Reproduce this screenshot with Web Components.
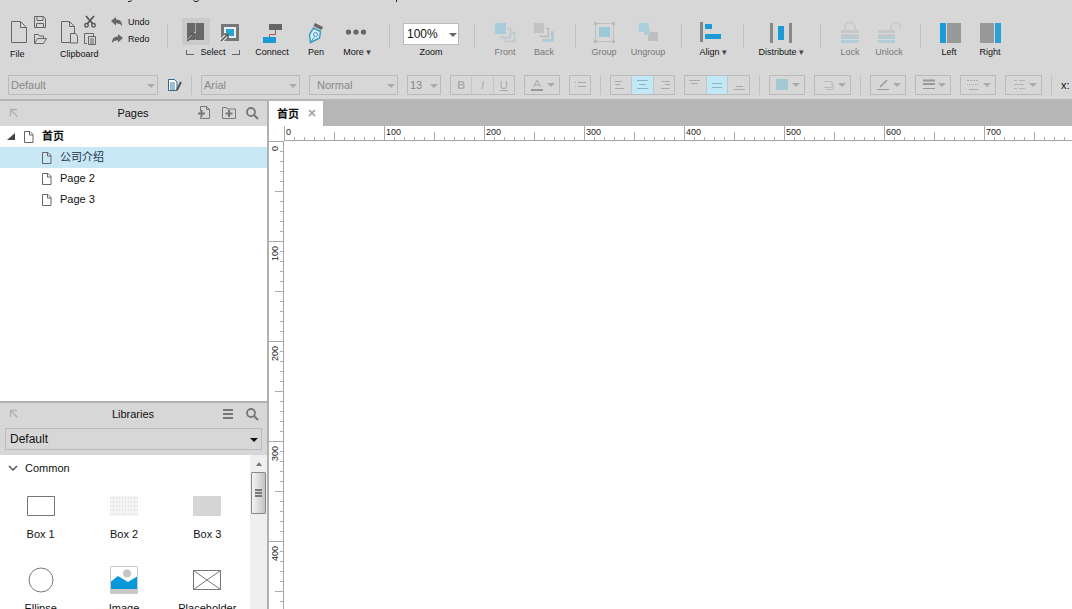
<!DOCTYPE html>
<html lang="en">
<head>
<meta charset="utf-8">
<title>Prototype editor</title>
<style>
  html, body { height: 100%; margin: 0; }
  body { font-family: "Liberation Sans", Arial, "Noto Sans CJK SC", sans-serif; font-size: 11px; color: #111; background: #fff; }
</style>
</head>
<body>
<editor-app></editor-app>
<script>
const ICONS = {
  file: [24, 30, '<path d="M3.5 5.5h9l6 6v15h-15zM12.500 5.500v6h6" fill="none" stroke="#666"/>'],
  save: [16, 15, '<path d="M2.500.5h9l2 2v9h-11zM5 .5v4h6v-4M4.500 11.500v-4h7v4" fill="none" stroke="#666"/>'],
  open: [16, 15, '<path d="M2.500 12.500v-9h4l1 1.500h4v2.500M2.500 12.500l3-5h9l-3 5z" fill="none" stroke="#666"/>'],
  clip: [24, 30, '<path d="M12 26.500H3.500v-21h8l5 5V17M11.500 5.500v5h5" fill="none" stroke="#666"/><path d="M12.500 17.500h5l2 2.500v7h-7z" fill="none" stroke="#666"/>'],
  cut: [16, 15, '<path d="M4 0l6.500 7.500M12 0L5.500 7.500" stroke="#555" stroke-width="1.800" fill="none"/><circle cx="4.500" cy="9.300" r="1.800" fill="none" stroke="#555" stroke-width="1.300"/><circle cx="11.500" cy="9.300" r="1.800" fill="none" stroke="#555" stroke-width="1.300"/>'],
  paste: [16, 15, '<path d="M5 12.500H2.500v-10h9V5" fill="none" stroke="#666"/><path d="M6.500 5.500h7v8h-7z" fill="none" stroke="#666"/><path d="M8 8h4M8 10h4M8 12h4M5 2.500h4" stroke="#666"/>'],
  undo: [14, 13, '<path d="M1 6l5-4v2.500c4 0 6 2 6 6.500-1.500-2-3-2.800-6-2.800V10.500z" fill="#666"/>'],
  redo: [14, 13, '<path d="M13 6L8 2v2.500c-4 0-6 2-6 6.500 1.500-2 3-2.800 6-2.800V10.500z" fill="#666"/>'],
  intersect: [28, 27, '<path d="M5 5h8v17H5zM14 5h8v17h-8z" fill="#686868"/><path d="M13.500 5v17" stroke="#aaa"/><path d="M6 22l7-7v4.500" stroke="#bbb" stroke-width="2" fill="none"/><path d="M5.500 23l6-6M8 16h5v5" stroke="#555" stroke-width="1.500" fill="none"/>'],
  contain: [28, 27, '<path d="M5 6h18v17H5z" fill="#777"/><path d="M8 9h12v11H8z" fill="#e5f3f9"/><path d="M10 11h8v7h-8z" fill="#27a4d5"/><path d="M5 23l7-7" stroke="#ddd" stroke-width="4"/><path d="M5 23l6-6M8 16h4v5" stroke="#555" stroke-width="1.500" fill="none"/>'],
  connect: [24, 24, '<path d="M9 3h13v6H9z" fill="#666"/><path d="M3 16h13v6H3z" fill="#1c9ad6"/><path d="M15.500 9v4.500h-6V16" fill="none" stroke="#a55"/>'],
  pen: [24, 24, '<path d="M11 2l8 4-1.500 3-8-4z" fill="#666"/><path d="M9.500 7l7 3.500-1 6.500-9 4.500-1-8z" fill="#d9eef7" stroke="#3a9cc4" stroke-width="1.500"/><path d="M6.500 21.500l4-6" stroke="#3a9cc4"/><circle cx="11.500" cy="13.500" r="2" fill="none" stroke="#3a9cc4"/>'],
  more: [24, 24, '<g fill="#666"><circle cx="3.500" cy="11" r="2.600"/><circle cx="11" cy="11" r="2.600"/><circle cx="18.500" cy="11" r="2.600"/></g>'],
  front: [24, 24, '<path d="M2 2h11v11H2z" fill="#a9ccda"/><path d="M15 7.500h2.500v9h-9V15M19 11.500h2.500v9h-9V18" stroke="#b9c8ce" fill="none" stroke-width="1.500"/>'],
  back: [24, 24, '<path d="M2 2h10v10H2z" fill="#c2c2c2"/><path d="M14 7.500h2.500v8h-8V14" stroke="#bcbcbc" fill="none" stroke-width="1.500"/><path d="M19 11.500h1.500v8h-9V18" stroke="#a9c9d5" fill="none" stroke-width="2.500"/>'],
  group: [24, 24, '<path d="M3.500 2.500h18v18h-18z" fill="none" stroke="#bfbfbf"/><path d="M7 6h11v10H7z" fill="#9cc8d9"/><path d="M2 1h3v3H2zM20 1h3v3h-3zM2 19h3v3H2zM20 19h3v3h-3z" fill="#bbb"/>'],
  ungroup: [24, 24, '<path d="M3 2h10v9H3z" fill="#aacfdd"/><path d="M12 11h10v9H12z" fill="#bfbfbf"/><path d="M8 9h6v5H8z" fill="#b5ccd5"/>'],
  align: [24, 24, '<path d="M-1 1h3v20h-3z" fill="#888"/><path d="M4 3h7v5H4zM4 13h16v5H4z" fill="#1c9ad6"/>'],
  distribute: [24, 24, '<path d="M1 2h3v20H1zM20 2h3v20h-3z" fill="#888"/><path d="M9 5h6v14H9z" fill="#1c9ad6"/>'],
  lock: [24, 24, '<path d="M7 9V6c0-6 10-6 10 0v3" fill="none" stroke="#c9c9c9" stroke-width="1.500"/><path d="M3 9h18v7H3z" fill="#c4c8c9"/><path d="M3 16h18v6H3z" fill="#b0ced8"/><path d="M3 12.500h18M3 18.500h18" stroke="#d5dadb"/>'],
  unlock: [24, 24, '<path d="M14 9V6c0-6 9-6 9 0v2" fill="none" stroke="#c9c9c9" stroke-width="1.500"/><path d="M1 9h17v7H1z" fill="#c4c8c9"/><path d="M1 16h17v6H1z" fill="#b0ced8"/><path d="M1 12.500h17M1 18.500h17" stroke="#d5dadb"/>'],
  left: [24, 24, '<path d="M3 2h6v20H3z" fill="#1c9ad6"/><path d="M10 2h14v20H10z" fill="#999"/>'],
  right: [24, 24, '<path d="M2 2h14v20H2z" fill="#999"/><path d="M17 2h6v20h-6z" fill="#2ba2d6"/>'],
  styles: [15, 16, '<path d="M1.500 2.500h6l2.500 2.500v8.500H1.500z" fill="#fff" stroke="#356a87"/><path d="M3 6h5M3 8h5M3 10h5M3 12h5" stroke="#2e7da3"/><path d="M14 5l-4 8" stroke="#555" stroke-width="2"/>'],
  fontcolor: [16, 16, '<path d="M4.500 10L8 3l3.500 7M5.500 8h5" fill="none" stroke="#aaa"/><path d="M2 12h12v2H2z" fill="#999"/>'],
  bullets: [16, 16, '<path d="M6 5.500h8M6 9.500h8M3 5.500h1M3 9.500h1" stroke="#aaa"/>'],
  tl: [16, 16, '<path d="M2 4.500h7M2 7.500h5M2 11.500h9" stroke="#aaa"/>'],
  tc: [16, 16, '<path d="M3 3.500h11M5 7.500h7M3 11.500h11" stroke="#88b5c4"/>'],
  tr: [16, 16, '<path d="M6 4.500h8M9 7.500h5M5 11.500h9" stroke="#aaa"/>'],
  vt: [16, 16, '<path d="M2 3.500h11M4 6.500h7" stroke="#aaa"/>'],
  vm: [16, 16, '<path d="M3 6.500h10M3 10.500h10" stroke="#88b5c4"/>'],
  vb: [16, 16, '<path d="M5 9.500h7M3 12.500h11" stroke="#aaa"/>'],
  fill: [16, 16, '<path d="M2 2h12v11H2z" fill="#a5c9d3"/>'],
  shadow: [16, 16, '<path d="M4 4.500h8v6H4M13 6v6.500H6" fill="none" stroke="#bbb"/>'],
  line: [16, 16, '<path d="M5 10l7-7" stroke="#999" stroke-width="1.500"/><path d="M2 12.500h12" stroke="#999"/>'],
  weight: [16, 16, '<path d="M3 3.500h12M3 7h12" stroke="#999" stroke-width="2"/><path d="M3 11.500h12" stroke="#999"/>'],
  dash: [16, 16, '<path d="M2 3.500h12" stroke="#aaa" stroke-dasharray="2 1"/><path d="M2 7.500h12" stroke="#aaa" stroke-dasharray="1 1"/><path d="M4 12.500h9" stroke="#aaa"/>'],
  arrows: [16, 16, '<path d="M3 3.500h3M8 3.500h6M3 7.500h10M3 11.500h3M8 11.500h6" stroke="#b5b5b5"/>'],
  corner: [10, 10, '<path d="M1.500 8V1.500H8M1.500 1.500L8.500 8.500" fill="none" stroke="#b0b0b0" stroke-width="1.300"/>'],
  addpage: [16, 16, '<path d="M4.500 6V1.500h6l3 3v9h-9V12M10.500 1.500v3h3" fill="none" stroke="#777"/><path d="M2 8.500h7M5.500 5v7" stroke="#777" stroke-width="2"/>'],
  addfolder: [16, 16, '<path d="M2.500 13.500V2.500h4l1 1.500h8v9.500z" fill="none" stroke="#777"/><path d="M5.500 8.500h7M9 5v7" stroke="#777" stroke-width="2"/>'],
  search: [16, 16, '<circle cx="7" cy="7" r="4" fill="none" stroke="#777" stroke-width="1.800"/><path d="M10 10l4 4" stroke="#777" stroke-width="2.200"/>'],
  menu: [16, 16, '<path d="M3 4h10M3 8h10M3 12h10" stroke="#777" stroke-width="1.800"/>'],
  page: [12, 14, '<path d="M1.500 1.500h5.500l3 3v8H1.500zM6.500 1.500V5H10" fill="none" stroke="#666"/>'],
  caret: [10, 10, '<path d="M9 1v7H1z" fill="#444"/>'],
  chevron: [10, 10, '<path d="M1 3l4 4 4-4" fill="none" stroke="#555" stroke-width="1.500"/>'],
  close: [8, 8, '<path d="M1 1l6 6M7 1L1 7" stroke="#aaa" stroke-width="1.800"/>'],
  up: [8, 8, '<path d="M1 6l3-4 3 4z" fill="#777"/>'],
  box1: [28, 28, '<path d="M.5 4.500h27v19H.5z" fill="#fff" stroke="#777"/>'],
  box2: [28, 28, '<defs><pattern id="d" width="3" height="4" patternUnits="userSpaceOnUse"><path d="M0 1h1v2H0z" fill="#e2e2e2"/></pattern></defs><path d="M0 4h28v20H0z" fill="#f4f4f4"/><path d="M0 4h28v20H0z" fill="url(#d)"/>'],
  box3: [28, 28, '<path d="M0 4h28v20H0z" fill="#d5d5d5"/>'],
  ellipse: [28, 28, '<circle cx="14" cy="14" r="12" fill="#fff" stroke="#777"/>'],
  image: [28, 28, '<path d="M.5.5h27v27H.5z" fill="#fff" stroke="#ccc"/><circle cx="17" cy="7.500" r="4" fill="#c5c5c5"/><path d="M1 15.500L8 10l10 6 9-5.500V23H1z" fill="#0a98d8"/><path d="M1 23h26v4H1z" fill="#c8c8c8"/>'],
  placeholder: [28, 28, '<path d="M.5 4.500h27v19H.5zM.5 4.500l27 19M27.500 4.500l-27 19" fill="#fff" stroke="#777"/>'],
  clipped: [400, 3, '<path d="M132.500 0l-1 1.500h-2.500M194.500.5l1.500 1h2.500l1-1.500M397.500 0v2" fill="none" stroke="#222" transform="translate(-1 0)"/>'],
};

const RESET = `
  *, ::before, ::after { box-sizing: border-box; }
  button { font: inherit; color: inherit; background: none; border: 0; padding: 0; margin: 0; display: block; }
  select { font: inherit; color: inherit; appearance: none; margin: 0; border-radius: 0; opacity: 1; }
`;

function define(name, html, setup) {
  const template = document.createElement('template');
  template.innerHTML = html;
  customElements.define(name, class extends HTMLElement {
    constructor() {
      super();
      const root = this.attachShadow({ mode: 'open' });
      const reset = document.createElement('style');
      reset.textContent = RESET;
      root.append(reset, template.content.cloneNode(true));
    }
    connectedCallback() { if (setup) setup(this, this.shadowRoot); }
  });
}

const iconTag = name => `<ui-icon name="${name}"></ui-icon>`;
const iconButtons = names => names.map(n => `<button aria-label="${n}">${iconTag(n)}</button>`).join('');

define('ui-icon', `<style>:host { display: block; flex: none; } svg { display: block; overflow: visible; }</style><div></div>`, (host, root) => {
  const [w, h, body] = ICONS[host.getAttribute('name')];
  root.querySelector('div').innerHTML = `<svg width="${w}" height="${h}" viewBox="0 0 ${w} ${h}" aria-hidden="true">${body}</svg>`;
});

/* Labelled tool in the ribbon; its width comes from --w. */
define('tool-button', `
<style>
  :host { display: block; flex: none; width: var(--w, 40px); padding-top: 21px; font-size: 9px; line-height: 12px; }
  :host([disabled]) { color: #777; }
  button { width: 100%; display: flex; flex-direction: column; align-items: center; gap: 1px; white-space: nowrap; }
  .arrow { font: 9px/12px "DejaVu Sans", sans-serif; color: #444; }
</style>
<button><div class="icon"></div><span><slot></slot></span></button>`, (host, root) => {
  root.querySelector('.icon').innerHTML = iconTag(host.getAttribute('icon'));
  root.querySelector('button').disabled = host.hasAttribute('disabled');
  if (host.hasAttribute('menu')) {
    root.querySelector('button > span').insertAdjacentHTML('beforeend', ' <span class="arrow">▾</span>');
  }
});

define('tool-sep', `
<style>
  :host { display: flex; justify-content: center; flex: none; width: var(--w, 1px); height: var(--h, 24px); margin-top: var(--t, 24px); }
  i { width: 1px; background: #c1c1c1; }
</style><i></i>`);

define('drop-down', `
<style>
  :host { display: block; position: relative; flex: none; width: var(--w, auto); height: var(--h, 20px); color: var(--ink, #888); font-size: var(--size, 11px); }
  select { width: 100%; height: 100%; border: 1px solid var(--edge, #bbb); background: var(--fill, transparent); padding: 0 0 0 var(--pad, 2px); }
  i { position: absolute; right: var(--inset, 3px); top: 50%; border: solid transparent; border-width: 4px 4px 0; border-top-color: var(--arrow, #aaa); margin-top: -1px; pointer-events: none; }
</style>
<select></select><i></i>`, (host, root) => {
  const select = root.querySelector('select');
  select.add(new Option(host.getAttribute('value')));
  select.setAttribute('aria-label', host.getAttribute('label'));
  select.disabled = host.hasAttribute('disabled');
});

/* A bordered strip of small format buttons. */
define('format-group', `
<style>
  :host { display: flex; flex: none; width: var(--w, 36px); height: 20px; border: 1px solid #bbb; color: #aaa; font-size: 11px; }
  button { flex: 1; display: flex; align-items: center; justify-content: center; gap: 2px; }
  button + button { border-left: 1px solid #c5c5c5; }
  button.on { background: #c3e8f5; }
  .arrow { border: solid transparent; border-width: 4px 4px 0; border-top-color: #aaa; }
</style>`, (host, root) => {
  for (const name of host.getAttribute('items').split(' ')) {
    const button = document.createElement('button');
    button.setAttribute('aria-label', name);
    const letters = { bold: '<b>B</b>', italic: '<i>I</i>', underline: '<u>U</u>' };
    button.innerHTML = letters[name] || iconTag(name);
    if (host.hasAttribute('menu')) button.innerHTML += '<span class="arrow"></span>';
    button.classList.toggle('on', host.getAttribute('on') === name);
    root.append(button);
  }
});

define('file-group', `
<style>
  :host { display: block; flex: none; width: var(--w); padding-top: 16px; font-size: 9px; line-height: 12px; }
  .icons { display: flex; height: 30px; }
  .label { padding: 2px 0 0 2px; }
</style>
<div class="icons"><div class="main"></div><div class="side"></div></div>
<div class="label"><slot></slot></div>`, (host, root) => {
  const [main, ...side] = host.getAttribute('icons').split(' ');
  root.querySelector('.main').innerHTML = iconButtons([main]);
  root.querySelector('.side').innerHTML = iconButtons(side);
});

define('history-group', `
<style>
  :host { display: block; flex: none; width: 44px; padding-top: 13px; font-size: 9px; }
  button { display: flex; align-items: center; gap: 4px; height: 17px; }
</style>
<button><ui-icon name="undo"></ui-icon>Undo</button>
<button><ui-icon name="redo"></ui-icon>Redo</button>`);

define('select-group', `
<style>
  :host { display: block; flex: none; width: 70px; padding: 18px 4px 0 2px; font-size: 9px; line-height: 12px; }
  .modes { display: flex; justify-content: space-between; width: 62px; }
  .on { background: #cacaca; }
  .label { display: flex; align-items: center; justify-content: center; gap: 6px; width: 62px; padding-top: 1px; }
  .label i { width: 8px; height: 5px; border: solid #666; border-width: 0 0 1px 1px; }
  .label i:last-child { border-width: 0 1px 1px 0; }
</style>
<div class="modes"><button class="on" aria-label="Intersect"><ui-icon name="intersect"></ui-icon></button><button aria-label="Contain"><ui-icon name="contain"></ui-icon></button></div>
<div class="label"><i></i><span>Select</span><i></i></div>`);

define('zoom-box', `
<style>
  :host { display: block; flex: none; width: 56px; padding-top: 23px; font-size: 9px; line-height: 12px; text-align: center; }
  drop-down { --h: 22px; --ink: #111; --size: 12px; --fill: #fff; --pad: 3px; --arrow: #666; --inset: 2px; margin-bottom: 1px; }
</style>
<drop-down value="100%" label="Zoom"></drop-down>Zoom`);

define('main-ribbon', `
<style>
  :host { display: flex; align-items: flex-start; height: 75px; padding-left: 8px; overflow: hidden; position: relative; }
  .rest { position: absolute; left: 0; top: 0; }
</style>
<ui-icon class="rest" name="clipped"></ui-icon>
<file-group icons="file save open" style="--w:50px">File</file-group>
<file-group icons="clip cut paste" style="--w:52px">Clipboard</file-group>
<history-group></history-group>
<tool-sep style="--w:26px"></tool-sep>
<select-group></select-group>
<tool-button icon="connect" style="--w:44px">Connect</tool-button>
<tool-button icon="pen" style="--w:44px">Pen</tool-button>
<tool-button icon="more" style="--w:38px" menu>More</tool-button>
<tool-sep style="--w:27px"></tool-sep>
<zoom-box></zoom-box>
<tool-sep style="--w:30px"></tool-sep>
<tool-button icon="front" style="--w:32px" disabled>Front</tool-button>
<tool-button icon="back" style="--w:46px" disabled>Back</tool-button>
<tool-sep style="--w:17px"></tool-sep>
<tool-button icon="group" style="--w:40px" disabled>Group</tool-button>
<tool-button icon="ungroup" style="--w:48px" disabled>Ungroup</tool-button>
<tool-sep style="--w:19px"></tool-sep>
<tool-button icon="align" style="--w:44px" menu>Align</tool-button>
<tool-sep style="--w:16px"></tool-sep>
<tool-button icon="distribute" style="--w:60px" menu>Distribute</tool-button>
<tool-sep style="--w:19px"></tool-sep>
<tool-button icon="lock" style="--w:40px" disabled>Lock</tool-button>
<tool-button icon="unlock" style="--w:38px" disabled>Unlock</tool-button>
<tool-sep style="--w:24px"></tool-sep>
<tool-button icon="left" style="--w:34px">Left</tool-button>
<tool-button icon="right" style="--w:48px">Right</tool-button>`);

define('style-bar', `
<style>
  :host { display: flex; align-items: center; gap: 9px; height: 20px; padding-left: 8px; overflow: hidden; white-space: nowrap; --t: 0px; --h: 20px; }
  span { color: #111; }
</style>
<drop-down value="Default" label="Widget style" style="--w:150px" disabled></drop-down>
<button aria-label="Style manager"><ui-icon name="styles"></ui-icon></button>
<tool-sep></tool-sep>
<drop-down value="Arial" label="Font" style="--w:99px" disabled></drop-down>
<drop-down value="Normal" label="Typeface" style="--w:89px;--pad:7px" disabled></drop-down>
<drop-down value="13" label="Font size" style="--w:34px" disabled></drop-down>
<format-group items="bold italic underline" style="--w:65px"></format-group>
<format-group items="fontcolor" menu></format-group>
<format-group items="bullets" style="--w:22px"></format-group>
<tool-sep></tool-sep>
<format-group items="tl tc tr" on="tc" style="--w:65px"></format-group>
<format-group items="vt vm vb" on="vm" style="--w:66px"></format-group>
<tool-sep></tool-sep>
<format-group items="fill" menu></format-group>
<format-group items="shadow" style="--w:37px" menu></format-group>
<tool-sep></tool-sep>
<format-group items="line" menu></format-group>
<format-group items="weight" menu></format-group>
<format-group items="dash" menu></format-group>
<format-group items="arrows" style="--w:37px" menu></format-group>
<tool-sep></tool-sep>
<span>x:</span>`);

define('panel-header', `
<style>
  :host { display: grid; grid-template-columns: 1fr auto 1fr; align-items: center; box-sizing: border-box; height: 25px; padding: 0 7px var(--below, 1px) 6px; }
  h2 { margin: 0; font: inherit; }
  .corner { padding-left: 3px; }
  .tools { display: flex; justify-content: flex-end; gap: 8px; }
</style>
<div class="corner"><ui-icon name="corner"></ui-icon></div><h2><slot></slot></h2><div class="tools"></div>`, (host, root) => {
  root.querySelector('.tools').innerHTML = iconButtons(host.getAttribute('tools').split(' '));
});

define('page-row', `
<style>
  :host { display: flex; align-items: center; height: 21px; padding-left: 41px; gap: 7px; line-height: 21px; }
  :host([root]) { padding-left: 6px; font-weight: bold; }
  :host([selected]) { background: #c9e8f6; color: #1b2f4a; }
  .caret { display: none; }
  :host([root]) .caret { display: block; }
</style>
<ui-icon class="caret" name="caret"></ui-icon><ui-icon name="page"></ui-icon><span><slot></slot></span>`);

define('pages-panel', `
<style>
  :host { display: flex; flex-direction: column; flex: none; height: 300px; }
  .tree { flex: 1; background: #fff; }
</style>
<panel-header tools="addpage addfolder search">Pages</panel-header>
<div class="tree">
  <page-row root>首页</page-row>
  <page-row selected>公司介绍</page-row>
  <page-row>Page 2</page-row>
  <page-row>Page 3</page-row>
</div>`);

define('library-item', `
<style>
  :host { display: flex; flex-direction: column; align-items: center; gap: 6px; height: 74px; line-height: 16px; }
</style>
<div class="icon"></div><span><slot></slot></span>`, (host, root) => {
  root.querySelector('.icon').innerHTML = iconTag(host.getAttribute('icon'));
});

define('libraries-panel', `
<style>
  :host { display: flex; flex-direction: column; flex: 1; min-height: 0; border-top: 2px solid #b0b0b0; }
  panel-header { --below: 3px; }
  drop-down { --h: 22px; --ink: #111; --size: 12px; --arrow: #111; --pad: 4px; --inset: 4px; margin: 0 5px 5px; }
  .body { display: flex; flex: 1; min-height: 0; background: #fff; }
  .list { flex: 1; overflow: hidden; }
  h3 { display: flex; align-items: center; gap: 7px; height: 26px; margin: 0 0 11px; padding-left: 8px; font: inherit; }
  .grid { display: grid; grid-template-columns: repeat(3, 1fr); margin-right: 1px; margin-left: -1px; }
  .scroll { width: 17px; background: #efefef; display: flex; flex-direction: column; align-items: center; padding-top: 5px; }
  .thumb { display: flex; flex-direction: column; justify-content: center; align-items: center; gap: 1px; width: 15px; height: 42px; margin-top: 4px; border: 1px solid #888; border-radius: 1px; background: linear-gradient(90deg, #f4f4f4, #c4c4c4); }
  .thumb i { width: 7px; height: 2px; background: #777; }
</style>
<panel-header tools="menu search">Libraries</panel-header>
<drop-down value="Default" label="Library"></drop-down>
<div class="body">
  <div class="list">
    <h3><ui-icon name="chevron"></ui-icon>Common</h3>
    <div class="grid">
      <library-item icon="box1">Box 1</library-item>
      <library-item icon="box2">Box 2</library-item>
      <library-item icon="box3">Box 3</library-item>
      <library-item icon="ellipse">Ellipse</library-item>
      <library-item icon="image">Image</library-item>
      <library-item icon="placeholder">Placeholder</library-item>
    </div>
  </div>
  <div class="scroll"><ui-icon name="up"></ui-icon><div class="thumb"><i></i><i></i><i></i></div></div>
</div>`);

/* Ruler: ticks are gradients at 10, 50 and 100 units, labels sit in 100px cells. */
define('canvas-ruler', `
<style>
  :host { display: block; overflow: hidden; background: #fff; font-size: 9px; line-height: 12px; color: #222; }
  div { display: flex; }
  span { flex: none; }
  :host([axis="x"]) {
    height: 15px; border-bottom: 1px solid #a5a5a5; box-sizing: border-box;
    background:
      repeating-linear-gradient(90deg, #aaa 0 1px, transparent 1px 100px) 0 0 / auto 15px repeat-x,
      repeating-linear-gradient(90deg, #aaa 0 1px, transparent 1px 50px) 0 6px / auto 9px repeat-x,
      repeating-linear-gradient(90deg, #aaa 0 1px, transparent 1px 10px) 0 11px / auto 4px repeat-x;
  }
  :host([axis="x"]) span { width: 100px; padding-left: 2px; }
  :host([axis="y"]) {
    width: 15px; border-right: 1px solid #a5a5a5; box-sizing: border-box;
    background:
      repeating-linear-gradient(180deg, #aaa 0 1px, transparent 1px 100px) 0 0 / 15px auto repeat-y,
      repeating-linear-gradient(180deg, #aaa 0 1px, transparent 1px 50px) 6px 0 / 9px auto repeat-y,
      repeating-linear-gradient(180deg, #aaa 0 1px, transparent 1px 10px) 11px 0 / 4px auto repeat-y;
  }
  :host([axis="y"]) div { flex-direction: column; }
  :host([axis="y"]) span { height: 100px; width: 12px; padding-bottom: 5px; writing-mode: vertical-rl; transform: rotate(180deg); text-align: right; }
</style><div></div>`, (host, root) => {
  const cells = root.querySelector('div');
  new ResizeObserver(draw).observe(host);
  function draw() {
    const length = host.getAttribute('axis') === 'x' ? host.clientWidth : host.clientHeight;
    cells.replaceChildren();
    for (let v = 0; v + 20 < length; v += 100) {
      const label = document.createElement('span');
      label.textContent = v;
      cells.append(label);
    }
  }
  draw();
});

define('canvas-area', `
<style>
  :host { display: grid; grid-template: 25px 15px 1fr / 15px 1fr; flex: 1; min-width: 0; background: #fff; }
  .tabs { grid-column: 1 / -1; display: flex; background: #b7b7b7; }
  .tab { display: flex; align-items: center; gap: 9px; width: 54px; padding: 0 0 1px 8px; background: #fff; font-weight: bold; }
  canvas-ruler { min-width: 0; min-height: 0; }
  [axis="x"] { grid-column: 2; }
</style>
<div class="tabs"><div class="tab">首页<button aria-label="Close tab"><ui-icon name="close"></ui-icon></button></div></div>
<canvas-ruler axis="x"></canvas-ruler>
<canvas-ruler axis="y"></canvas-ruler>`);

define('editor-app', `
<style>
  :host { display: flex; flex-direction: column; height: 100vh; overflow: hidden; background: #d7d7d7; }
  .work { display: flex; flex: 1; min-height: 0; margin-top: 4px; border-top: 2px solid #b5b5b5; }
  aside { display: flex; flex-direction: column; flex: none; width: 269px; border-right: 2px solid #b0b0b0; }
</style>
<main-ribbon></main-ribbon>
<style-bar></style-bar>
<div class="work">
  <aside><pages-panel></pages-panel><libraries-panel></libraries-panel></aside>
  <canvas-area></canvas-area>
</div>`);
</script>
</body>
</html>
